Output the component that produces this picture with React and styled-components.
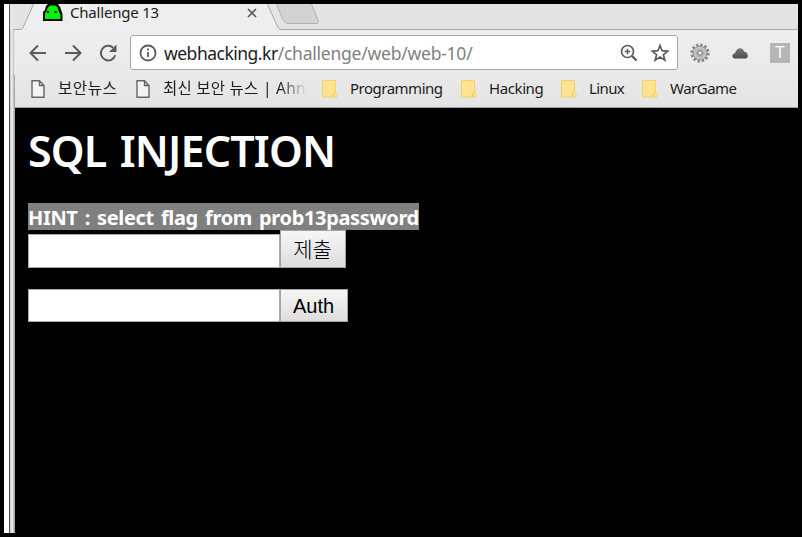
import React from "react";
import styled, { createGlobalStyle } from "styled-components";

const Global = createGlobalStyle`
  * { box-sizing: border-box; }
  body { margin: 0; background: #000; overflow: hidden; }
`;

const Frame = styled.div`
  width: 802px;
  height: 537px;
  border: 4px solid #000;
  background: #000;
  display: flex;
  overflow: hidden;
  font-family: "Noto Sans", "Noto Sans CJK KR", sans-serif;
`;

const Edge = styled.div`
  flex: 0 0 11px;
  background: linear-gradient(90deg, #fff 0 5px, #555 5px 6px, #d0d0d0 6px 7px, #e6e6e6 7px 9px, #c2c2c2 9px 10px, #a8a8a8 10px 11px);
`;

const Window = styled.div`
  flex: 1;
  min-width: 0;
  display: flex;
  flex-direction: column;
`;

const TabStrip = styled.div`
  height: 26px;
  flex: none;
  display: flex;
  position: relative;
  margin-left: -5px;
  background: #e4e4e4;
`;

const TabShape = styled.svg`
  position: absolute;
  left: 0;
  top: 0;
`;

const TabContent = styled.div`
  position: relative;
  display: flex;
  align-items: center;
  width: 270px;
  height: 18px;
  padding-left: 33px;
`;

const Line = styled.span`
  display: inline-block;
  white-space: pre;
  flex: none;
  color: ${(p) => p.$color || "#1c1c1c"};
  font-size: ${(p) => p.$size}px;
  letter-spacing: ${(p) => p.$track || 0}px;
  line-height: 20px;
`;

const TabTitle = styled(Line)`
  width: 177px;
  margin-left: 7px;
  margin-top: -2px;
`;

const Toolbar = styled.div`
  height: 45px;
  flex: none;
  display: flex;
  align-items: center;
  padding: 0 0 0 13px;
  margin-left: -1px;
  background: linear-gradient(#eeeeee, #e9e9e9);
`;

const NavGroup = styled.div`
  display: flex;
  gap: 13px;
  width: 103px;
`;

const Address = styled.div`
  width: 548px;
  height: 35px;
  display: flex;
  align-items: center;
  background: #fff;
  border: 1px solid #a6a6a6;
  border-radius: 3px;
  padding: 0 7px;
`;

const Url = styled.div`
  display: flex;
  flex: 1;
  margin-left: 6px;
`;

const Extensions = styled.div`
  display: flex;
  align-items: center;
  gap: 20px;
  margin-left: 12px;
`;

const ExtensionTile = styled.div`
  width: 20px;
  height: 20px;
  background: #b5b5b5;
  color: #fff;
  font: 16px/20px "Liberation Sans", sans-serif;
  text-align: center;
`;

const Bookmarks = styled.div`
  height: 33px;
  flex: none;
  display: flex;
  align-items: center;
  padding: 0 0 5px 16px;
  background: linear-gradient(#e9e9e9, #e4e4e4);
  border-bottom: 1px solid #a0a0a0;
`;

const Bookmark = styled.div`
  display: flex;
  align-items: center;
  gap: ${(p) => p.$gap}px;
  width: ${(p) => p.$width}px;
  flex: none;

  ${Line} {
    margin-top: -2px;
  }
`;

const Faded = styled(Line)`
  width: 144px;
  mask-image: linear-gradient(90deg, #000 116px, transparent 144px);
`;

const Page = styled.main`
  flex: 1;
  background: #000;
  padding: 17px 0 0 13px;
`;

const Heading = styled.h1`
  margin: 0;
  height: 78px;
  color: #fff;
  font-size: 43px;
  line-height: 52px;
  font-weight: 600;
  white-space: pre;
  letter-spacing: -0.85px;
  word-spacing: 3px;
`;

const Hint = styled.div`
  width: 391px;
  height: 27px;
  background: #808080;
  color: #fff;
  font-size: 20px;
  line-height: 29px;
  font-weight: 700;
  white-space: pre;
  letter-spacing: -0.35px;
  word-spacing: 2.3px;
`;

const Form = styled.form`
  display: flex;
  align-items: flex-end;
  height: ${(p) => p.$height}px;
  margin-bottom: 21px;
`;

const Field = styled.input`
  width: 252px;
  height: ${(p) => p.$height}px;
  margin: 0;
  padding: 0;
  border: 1px solid #a9a9a9;
  border-radius: 0;
  background: #fff;
  outline: 0;
`;

const Submit = styled.button`
  width: ${(p) => p.$width}px;
  height: 100%;
  margin: 0;
  padding: 0 1px 0 0;
  border: 1px solid #a3a3a3;
  border-radius: 0;
  background: linear-gradient(#f6f6f6, #dddddd);
  color: #000;
  font: ${(p) => p.$size}px/1 "Liberation Sans", "Noto Sans CJK KR", sans-serif;
  font-weight: ${(p) => p.$weight || 400};
`;

const stroke = { fill: "none", stroke: "#5a5a5a", strokeWidth: 2 };

const Ghost = () => (
  <svg width="20" height="18" viewBox="0 0 20 18">
    <path d="M0 17V8L2 6L3 2L5 0H15L17 3L19.500 10V17Z" fill="#000" />
    <path d="M2 15V9.500L3.500 7L4.500 4L7 1.500H12L14.500 3L15.500 6.500L17.500 11V15Z" fill="#00f500" />
    <path d="M4 7h2v2H4zM11.500 7h2v2h-2z" fill="#000" />
  </svg>
);

const Close = () => (
  <svg width="10" height="10" viewBox="0 0 10 10">
    <path d="M1 1L9 9M9 1L1 9" {...stroke} strokeWidth="1.7" />
  </svg>
);

const Back = () => (
  <svg width="22" height="22" viewBox="0 0 22 22">
    <path d="M19 11H4M11 3.500L3.500 11L11 18.500" {...stroke} />
  </svg>
);

const Forward = () => (
  <svg width="22" height="22" viewBox="0 0 22 22">
    <path d="M3 11H18M11 3.500L18.500 11L11 18.500" {...stroke} />
  </svg>
);

const Reload = () => (
  <svg width="22" height="22" viewBox="0 0 22 22">
    <path d="M18.200 13.200A7.300 7.300 0 1 1 16.200 5.800" {...stroke} />
    <path d="M19.500 2.500V10H12Z" fill="#5a5a5a" />
  </svg>
);

const Info = () => (
  <svg width="20" height="20" viewBox="0 0 20 20">
    <circle cx="10" cy="10" r="7.500" {...stroke} strokeWidth="1.800" />
    <path d="M10 9v5M10 5.500v2" {...stroke} strokeWidth="1.800" />
  </svg>
);

const Magnify = () => (
  <svg width="20" height="20" viewBox="0 0 20 20">
    <circle cx="8.500" cy="8.500" r="6" {...stroke} strokeWidth="1.700" />
    <path d="M13 13L17.500 17.500" {...stroke} strokeWidth="2.300" />
    <path d="M8.500 5.700v5.600M5.700 8.500h5.600" {...stroke} strokeWidth="1.500" />
  </svg>
);

const StarIcon = styled.svg`
  margin-left: 11px;
`;

const Star = () => (
  <StarIcon width="20" height="20" viewBox="0 0 20 20">
    <path d="M10 2.500L12.100 7.700L17.700 8.100L13.400 11.700L14.800 17.100L10 14.100L5.200 17.100L6.600 11.700L2.300 8.100L7.900 7.700Z" {...stroke} strokeWidth="1.700" />
  </StarIcon>
);

const Gear = () => (
  <svg width="20" height="20" viewBox="0 0 20 20">
    <circle cx="10" cy="10" r="8.300" fill="none" stroke="#858585" strokeWidth="2.600" strokeDasharray="2.400 1.946" />
    <circle cx="10" cy="10" r="7" fill="#c2c2c2" stroke="#8d8d8d" strokeWidth="1" />
    <circle cx="10" cy="10" r="4.200" fill="#b2b2b2" />
    <circle cx="10" cy="10" r="2.200" fill="#eee" stroke="#777" strokeWidth="1" />
  </svg>
);

const Cloud = () => (
  <svg width="20" height="20" viewBox="0 0 20 20">
    <defs>
      <linearGradient id="cloud" x2="0" y2="1">
        <stop stopColor="#777" />
        <stop offset="1" stopColor="#4c4c4c" />
      </linearGradient>
    </defs>
    <path d="M5 15.500C1.500 15.500 1.700 10.500 5.200 10C6 5 12.500 3 14 8.500C18.500 9 19 15.500 15.500 15.500Z" fill="url(#cloud)" />
  </svg>
);

const PageIcon = () => (
  <svg width="14" height="20" viewBox="0 0 14 20">
    <path d="M1 1.800H8.500L13 6.500V18.200H1Z M8.500 1.800V6.500H13" fill="#f3f3f3" stroke="#666" strokeWidth="1.400" />
  </svg>
);

const Folder = () => (
  <svg width="17" height="20" viewBox="0 0 17 20">
    <path d="M1.500 1.500H14.500V13L16 14.500V18H1.500Z" fill="#ffe391" stroke="#f1d072" />
    <path d="M12.500 18V15L14 13.200" fill="none" stroke="#ecc351" />
  </svg>
);

const folders = [
  { label: "Programming", width: 139, track: -0.5 },
  { label: "Hacking", width: 100, track: -0.4 },
  { label: "Linux", width: 81, track: -0.6 },
  { label: "WarGame", width: 110, track: -0.5 },
];

export default function App() {
  return (
    <Frame>
      <Global />
      <Edge />
      <Window>
        <TabStrip>
          <TabShape width="788" height="26" viewBox="0 0 788 26">
            <path d="M3 26V25.500H10Q12 25.500 13 23.500L24 -1H257L268 23.500Q269 25.500 271 25.500H788V26Z" fill="#eeeeee" />
            <path d="M3.500 26V25.500H10Q12 25.500 13 23.500L24 -1M257 -1L268 23.500Q269 25.500 271 25.500H788" fill="none" stroke="#a5a5a5" />
            <path d="M266 -1L273 16Q275 19.500 278 19.500H306Q309.500 19.500 308 16L301 -1Z" fill="#d2d2d2" stroke="#b0b0b0" />
          </TabShape>
          <TabContent>
            <Ghost />
            <TabTitle $size={15} $track={-0.2}>Challenge 13</TabTitle>
            <Close />
          </TabContent>
        </TabStrip>
        <Toolbar>
          <NavGroup>
            <Back />
            <Forward />
            <Reload />
          </NavGroup>
          <Address>
            <Info />
            <Url>
              <Line $size={17.5} $track={-0.5}>webhacking.kr</Line>
              <Line $size={17.5} $track={-0.23} $color="#808080">/challenge/web/web-10/</Line>
            </Url>
            <Magnify />
            <Star />
          </Address>
          <Extensions>
            <Gear />
            <Cloud />
            <ExtensionTile>T</ExtensionTile>
          </Extensions>
        </Toolbar>
        <Bookmarks>
          <Bookmark $gap={13} $width={105}>
            <PageIcon />
            <Line $size={15.5} $track={0.6}>보안뉴스</Line>
          </Bookmark>
          <Bookmark $gap={13} $width={185}>
            <PageIcon />
            <Faded $size={15.5} $track={0.25}>최신 보안 뉴스 | Ahn</Faded>
          </Bookmark>
          {folders.map((f) => (
            <Bookmark key={f.label} $gap={12} $width={f.width}>
              <Folder />
              <Line $size={15} $track={f.track}>{f.label}</Line>
            </Bookmark>
          ))}
        </Bookmarks>
        <Page>
          <Heading>SQL INJECTION</Heading>
          <Hint>HINT : select flag from prob13password</Hint>
          <Form $height={38} onSubmit={(e) => e.preventDefault()}>
            <Field $height={34} />
            <Submit $width={66} $size={21} $weight={300}>제출</Submit>
          </Form>
          <Form $height={33} onSubmit={(e) => e.preventDefault()}>
            <Field $height={33} />
            <Submit $width={68} $size={20}>Auth</Submit>
          </Form>
        </Page>
      </Window>
    </Frame>
  );
}
